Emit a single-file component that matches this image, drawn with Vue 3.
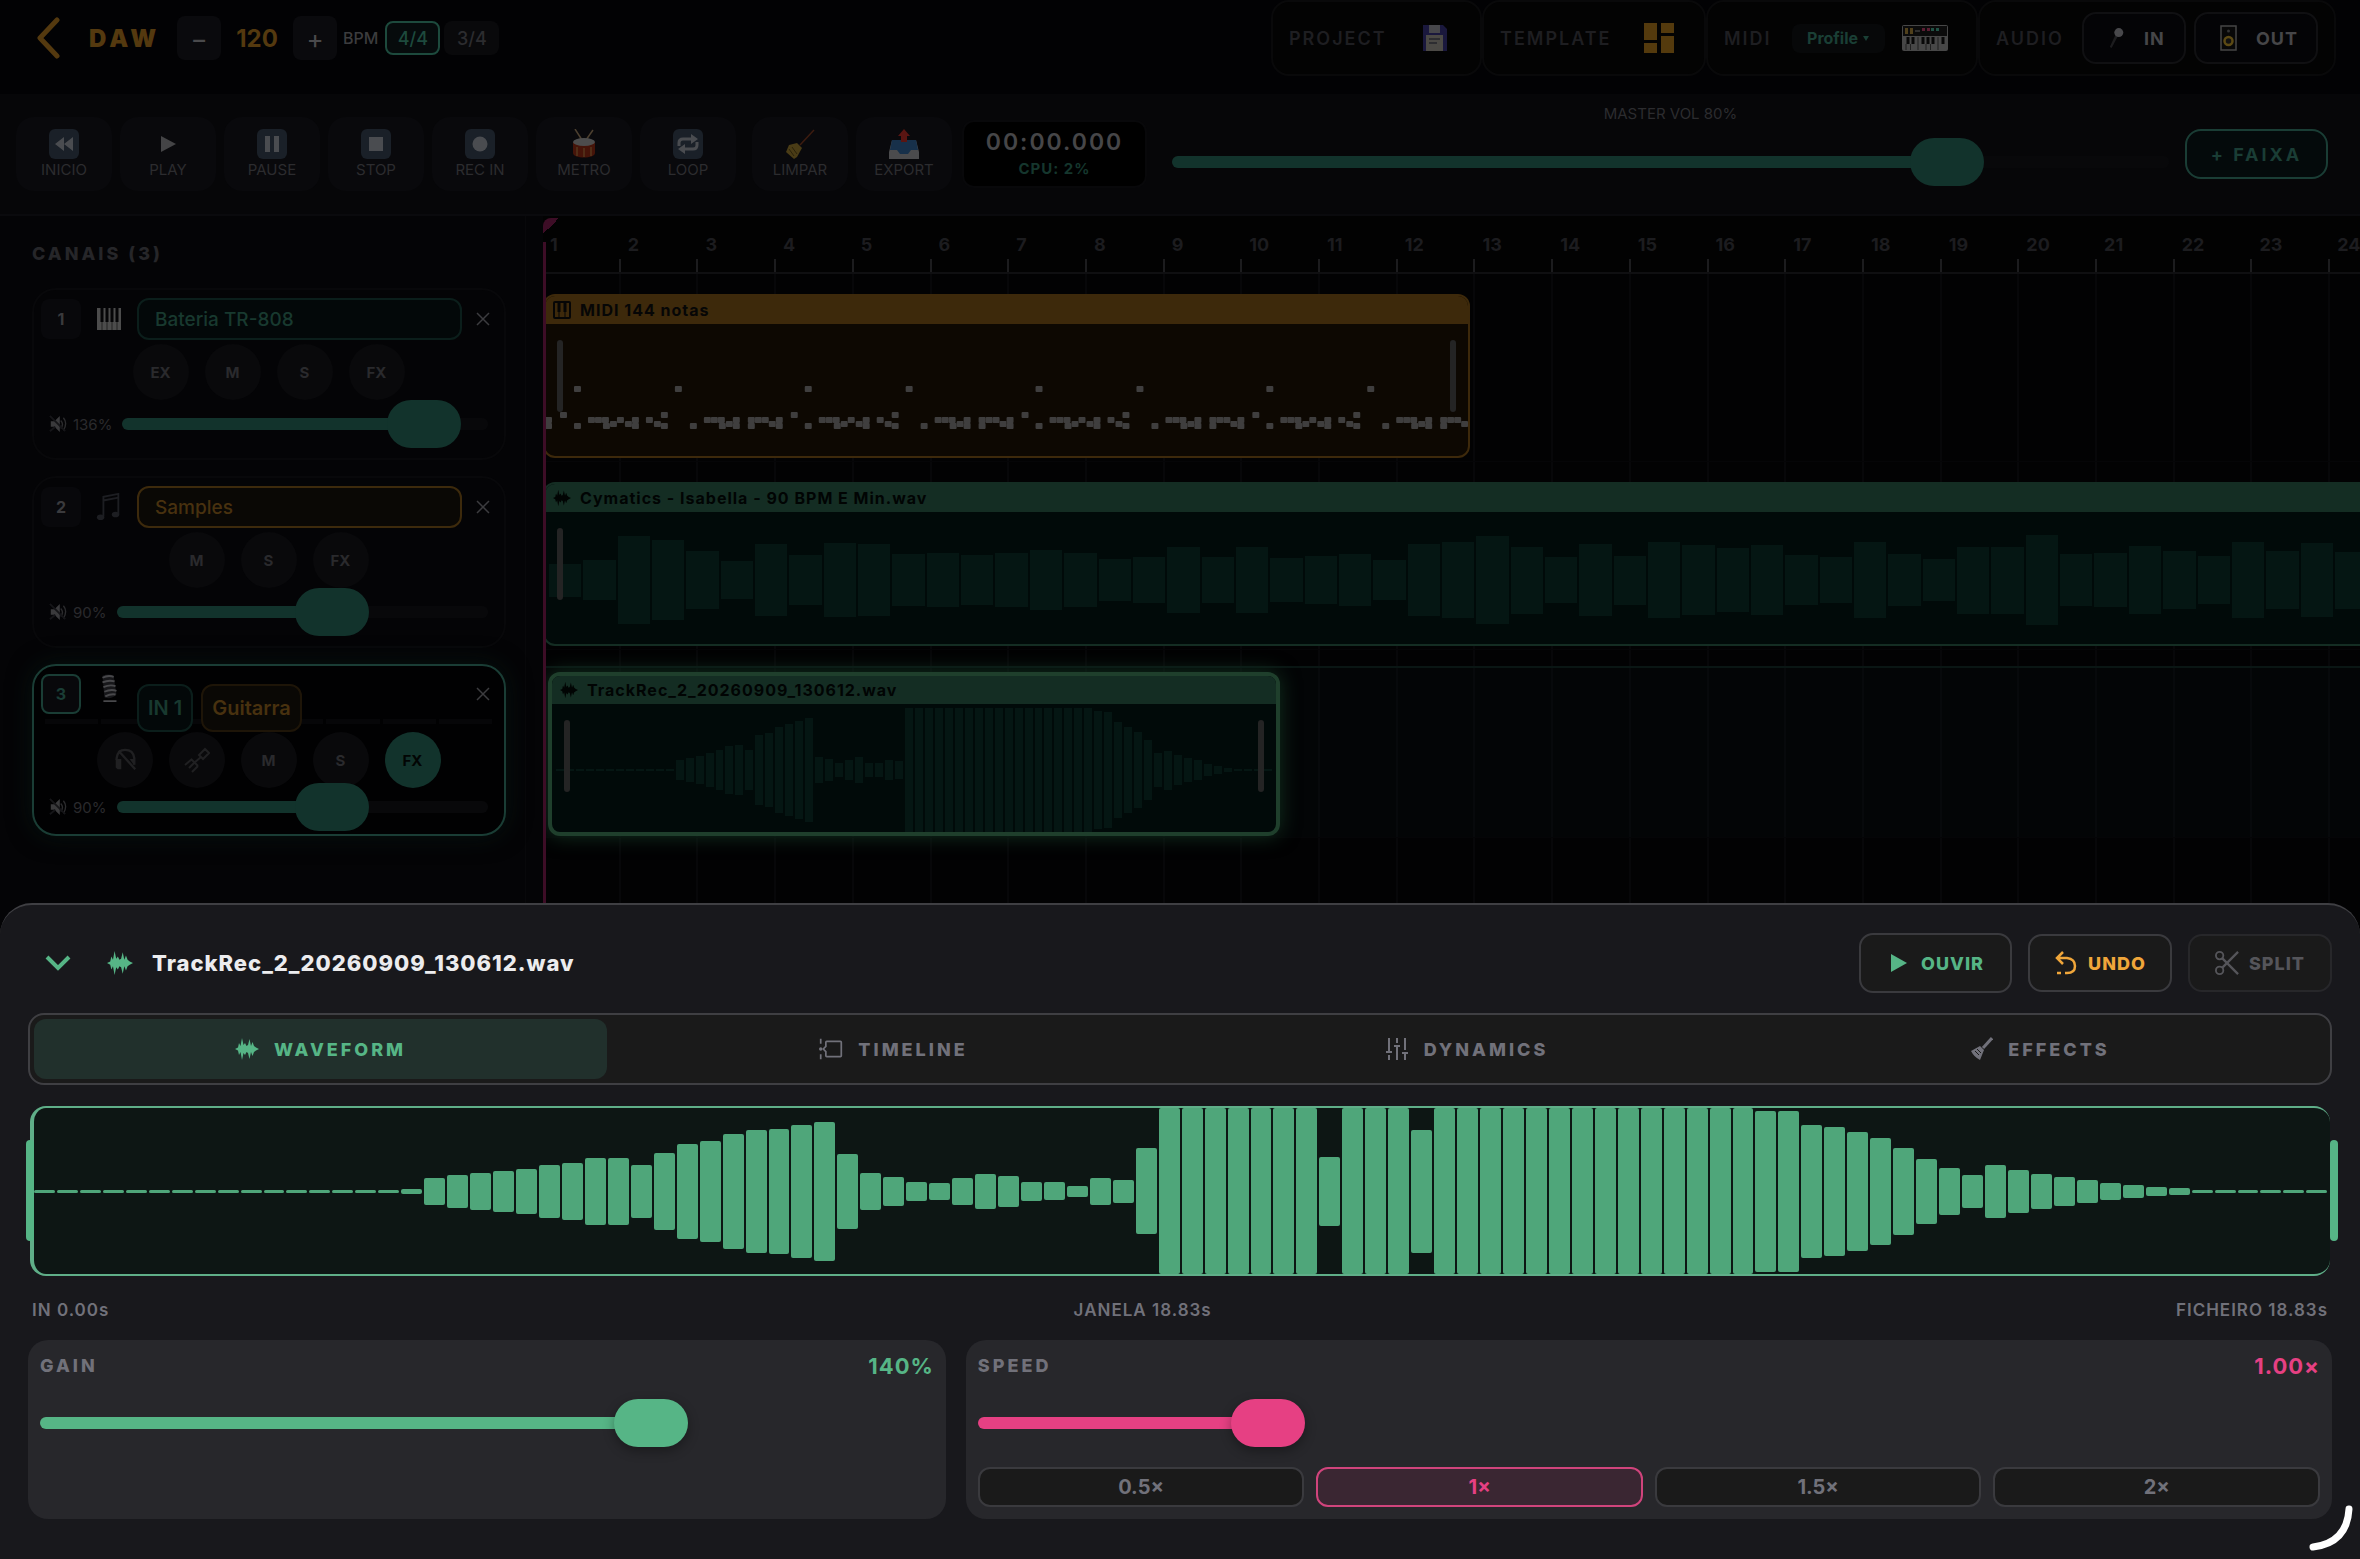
<template>
    <div class="daw">
        <!-- icon set -->
        <svg class="sprite" aria-hidden="true">
            <symbol id="i-wave" viewBox="0 0 24 24">
                <path d="M0 12 3 10.500 4 6 5.500 9 7 1 8.500 8 10 6 11.500 9 13 8 14.500 2 16 9 17.500 5 19 9 21 10.500 24 12 21 13.500 19 15 17.500 19 16 15 14.500 22 13 16 11.500 15 10 18 8.500 16 7 23 5.500 15 4 18 3 13.500Z" fill="currentColor" />
            </symbol>
            <symbol id="i-rewind" viewBox="0 0 30 30">
                <rect width="30" height="30" rx="6" fill="#1a2028" />
                <path d="M15 8v14L6 15zM24 8v14l-9-7z" fill="#4a4c50" />
            </symbol>
            <symbol id="i-play" viewBox="0 0 30 30">
                <path d="M8 7v16l15-8z" fill="#444446" />
            </symbol>
            <symbol id="i-pause" viewBox="0 0 30 30">
                <rect width="30" height="30" rx="6" fill="#1a2028" />
                <path d="M8 7h5v16H8zM17 7h5v16h-5z" fill="#4a4c50" />
            </symbol>
            <symbol id="i-stop" viewBox="0 0 30 30">
                <rect width="30" height="30" rx="6" fill="#1a2028" />
                <path d="M8 8h14v14H8z" fill="#4a4c50" />
            </symbol>
            <symbol id="i-rec" viewBox="0 0 30 30">
                <rect width="30" height="30" rx="6" fill="#1a2028" />
                <circle cx="15" cy="15" r="7.500" fill="#4a4c50" />
            </symbol>
            <symbol id="i-drum" viewBox="0 0 30 30">
                <path d="M6 0l7 11M24 1l-7 10" stroke="#4d4030" stroke-width="1.500" />
                <path d="M4 13v11c0 6 22 6 22 0V13z" fill="#451409" />
                <path d="M8 18v9M15 19v9M22 18v9" stroke="#54361c" stroke-width="1.500" />
                <ellipse cx="15" cy="13" rx="11" ry="4" fill="#4d4d4d" />
            </symbol>
            <symbol id="i-loop" viewBox="0 0 30 30">
                <rect width="30" height="30" rx="6" fill="#1a2028" />
                <path d="M6 17v-3q0-4 4-4h9M24 13v3q0 4-4 4h-9" fill="none" stroke="#4a4c50" stroke-width="3" />
                <path d="M18 5l7 5-7 5zM12 15l-7 5 7 5z" fill="#4a4c50" />
            </symbol>
            <symbol id="i-broom" viewBox="0 0 30 30">
                <path d="M29 1 15 16" stroke="#3d1c10" stroke-width="1.500" />
                <path d="M12 14l5 5-5 9-3 2-8-7 3-7z" fill="#4a3c16" />
                <path d="M7 18l5 7M4 20l5 7" stroke="#2b220a" />
            </symbol>
            <symbol id="i-export" viewBox="0 0 30 30">
                <path d="M3 11h24l3 12v7H0v-7z" fill="#4b4b4d" />
                <path d="M3 11h24l2 10h-7l-3 4h-8l-3-4H1z" fill="#17304a" />
                <path d="M15 0l6 7h-3v6h-6V7H9z" fill="#5a1512" />
            </symbol>
            <symbol id="i-floppy" viewBox="0 0 26 28">
                <path d="M1 1h20l4 4v22H1z" fill="#1a183d" />
                <path d="M7 1h11v8H7z" fill="#47474b" />
                <path d="M4 11h17v16H4z" fill="#4b4945" />
                <path d="M7 15h11M7 19h8" stroke="#25242b" stroke-width="1.500" />
            </symbol>
            <symbol id="i-template" viewBox="0 0 30 30">
                <path d="M0 0h13v17H0zM17 0h13v10H17zM0 20h13v10H0zM17 13h13v17H17z" fill="#543a0d" />
            </symbol>
            <symbol id="i-synth" viewBox="0 0 46 26">
                <rect width="46" height="26" rx="2" fill="#474747" />
                <path d="M1 1h44v10H1z" fill="#0b0b0b" />
                <path d="M3 3h3v6H3zM8 3h3v6H8z" fill="#50401b" />
                <path d="M13 6h5" stroke="#555" />
                <path d="M20 3h3v3h-3zM25 3h3v3h-3z" fill="#5b1d33" />
                <path d="M29 3h3v3h-3zM34 3h3v3h-3z" fill="#215245" />
                <path d="M6 12v7M11 12v7M21 12v7M26 12v7M31 12v7M41 12v7" stroke="#080808" stroke-width="3" />
                <path d="M4 19v6M8.500 19v6M16 12v13M24 19v6M36 12v13M28.500 19v6" stroke="#202020" />
            </symbol>
            <symbol id="i-mic" viewBox="0 0 20 26">
                <path d="M12 9 4 24l-2-1L9 8z" fill="#1c1c1e" />
                <circle cx="12" cy="7" r="5" fill="#48484b" />
            </symbol>
            <symbol id="i-speaker" viewBox="0 0 18 26">
                <rect x="1" y="1" width="15" height="24" fill="#080808" stroke="#454545" stroke-width="1.500" />
                <circle cx="8.500" cy="16" r="4" fill="#111" stroke="#5c4a14" stroke-width="2.500" />
                <circle cx="8.500" cy="6" r="1.500" fill="#333" />
            </symbol>
            <symbol id="i-keys" viewBox="0 0 26 22">
                <path d="M1 0h24v22H1z" fill="#4c4c4c" />
                <path d="M6 0v14M11 0v14M16 0v14M21 0v14" stroke="#050507" stroke-width="3" />
                <path d="M6 14v8M11 14v8M16 14v8M21 14v8" stroke="#222" />
            </symbol>
            <symbol id="i-note" viewBox="0 0 26 30">
                <path d="M7 25V4l16-3v22M7 8l16-3" fill="none" stroke="#1d1e22" stroke-width="2" />
                <ellipse cx="4" cy="26" rx="4" ry="3" fill="#1d1e22" />
                <ellipse cx="20" cy="23" rx="4" ry="3" fill="#1d1e22" />
            </symbol>
            <symbol id="i-studio" viewBox="0 0 26 30">
                <path d="M6 2q6-3 12 0l3 20q-6 6-13 3z" fill="#17171a" />
                <path d="M6 4q6-3 12-1M6 9q7-3 13-1M7 14q7-3 13-1M8 19q7-3 13-1M9 24q6-3 11-2M7 29h14" fill="none" stroke="#48484b" stroke-width="2" />
            </symbol>
            <symbol id="i-mute" viewBox="0 0 20 20">
                <path d="M2 7h4l6-6v18l-6-6H2z" fill="#3a3a3c" />
                <path d="M13 6q4 4 0 9M16 3q5 6 0 14" fill="none" stroke="#2c2c2e" stroke-width="1.500" />
                <path d="M1 1l17 17M1 18l6-5" stroke="#151518" stroke-width="2" />
            </symbol>
            <symbol id="i-close" viewBox="0 0 14 14">
                <path d="M1 1l12 12M13 1 1 13" stroke="currentColor" stroke-width="1.500" />
            </symbol>
            <symbol id="i-headoff" viewBox="0 0 26 28">
                <path d="M4 14v-2q1-9 9-9 9 0 10 9v7M6 4l18 20" fill="none" stroke="currentColor" stroke-width="2.500" />
                <path d="M3 13h6v11H5l-2-2zM18 13h5v7z" fill="currentColor" />
            </symbol>
            <symbol id="i-plug" viewBox="0 0 26 26">
                <path d="M21 2l4 4-6 6-4-4zM17 10l-7 6M7 12l7 7M8 12l-7 6M11 15l-6 6M14 19l-6 6" fill="none" stroke="currentColor" stroke-width="2" />
            </symbol>
            <symbol id="i-piano" viewBox="0 0 18 18">
                <rect x="1" y="1" width="16" height="16" rx="1" fill="none" stroke="currentColor" stroke-width="2" />
                <path d="M6 2v9M12 2v9" stroke="currentColor" stroke-width="3" />
                <path d="M6 11v6M12 11v6" stroke="currentColor" />
            </symbol>
            <symbol id="i-timeline" viewBox="0 0 28 24">
                <path d="M2 0v6M2 18v6" stroke="currentColor" stroke-width="2" />
                <circle cx="2" cy="12" r="2" fill="currentColor" />
                <path d="M9 3h16q1 0 1 1v16q0 1-1 1H9q-1 0-1-1v-5l-3-3 3-3V4q0-1 1-1z" fill="none" stroke="currentColor" stroke-width="2" />
            </symbol>
            <symbol id="i-sliders" viewBox="0 0 24 24">
                <path d="M4 1v13M4 18v5M1 15h6M12 1v5M12 10v13M9 9h6M20 1v12M20 17v6M17 16h6" stroke="currentColor" stroke-width="2" />
            </symbol>
            <symbol id="i-guitar" viewBox="0 0 24 24">
                <path d="M23 1 14 11" stroke="currentColor" stroke-width="3" />
                <path d="M11 9l4 4-4 10q-6-3-9-9z" fill="currentColor" />
                <path d="M8 12l4 4M6 14l4 4" stroke="#1a1a1a" />
            </symbol>
            <symbol id="i-undo" viewBox="0 0 24 24">
                <path d="M9 1 3 7l6 6M4 7h9q8 1 8 8t-8 7h-2M3 22h4" fill="none" stroke="currentColor" stroke-width="2.500" />
            </symbol>
            <symbol id="i-cut" viewBox="0 0 26 26">
                <circle cx="5" cy="5" r="4" fill="none" stroke="currentColor" stroke-width="2" />
                <circle cx="5" cy="21" r="4" fill="none" stroke="currentColor" stroke-width="2" />
                <path d="M8 8l17 17M8 18 25 1" stroke="currentColor" stroke-width="2.500" />
            </symbol>
        </svg>

        <header class="topbar">
            <div class="topbar-left">
                <button class="back" aria-label="Voltar">
                    <svg viewBox="0 0 24 42"><path d="M21 3 4 21l17 18" fill="none" stroke="currentColor" stroke-width="5" stroke-linecap="round" stroke-linejoin="round" /></svg>
                </button>
                <h1>DAW</h1>
                <button class="step" aria-label="Menos BPM">−</button>
                <span class="bpm">120</span>
                <button class="step" aria-label="Mais BPM">+</button>
                <span class="unit">BPM</span>
                <button class="meter on">4/4</button>
                <button class="meter">3/4</button>
            </div>
            <div class="topbar-right">
                <div class="group project"><span>PROJECT</span><button aria-label="Guardar"><svg class="floppy"><use href="#i-floppy" /></svg></button></div>
                <div class="group template"><span>TEMPLATE</span><button aria-label="Templates"><svg class="tpl"><use href="#i-template" /></svg></button></div>
                <div class="group midi">
                    <span>MIDI</span>
                    <button class="profile">Profile <i></i></button>
                    <svg class="synth"><use href="#i-synth" /></svg>
                </div>
                <div class="group audio">
                    <span>AUDIO</span>
                    <button class="io in"><svg><use href="#i-mic" /></svg>IN</button>
                    <button class="io out"><svg><use href="#i-speaker" /></svg>OUT</button>
                </div>
            </div>
        </header>

        <section class="toolbar">
            <div class="transport">
                <button v-for="t in transport" :key="t.label" :class="{ spaced: t.spaced }">
                    <svg><use :href="t.icon" /></svg>
                    {{ t.label }}
                </button>
            </div>
            <div class="clock">
                <strong>00:00.000</strong>
                <small>CPU: 2%</small>
            </div>
            <div class="master">
                <label for="master">MASTER VOL {{ master }}%</label>
                <input id="master" class="slider" type="range" min="0" max="100" v-model="master" :style="fill(master, 0, 100)">
            </div>
            <button class="add-track">+ FAIXA</button>
        </section>

        <main class="workspace">
            <aside class="channels">
                <h2>CANAIS (3)</h2>
                <article v-for="c in channels" :key="c.id" class="channel" :class="{ selected: c.selected }">
                    <div class="channel-top">
                        <span class="num">{{ c.id }}</span>
                        <svg :class="c.iconClass"><use :href="c.icon" /></svg>
                        <input v-if="!c.selected" type="text" v-model="c.name" :class="c.color" aria-label="Nome do canal">
                        <div v-else class="pills">
                            <button class="teal">IN 1</button>
                            <button class="gold">Guitarra</button>
                        </div>
                        <button class="close" aria-label="Remover canal"><svg><use href="#i-close" /></svg></button>
                    </div>
                    <div v-if="c.selected" class="level"><i v-for="n in 8" :key="n"></i></div>
                    <div class="rounds">
                        <template v-if="c.selected">
                            <button aria-label="Monitor"><svg><use href="#i-headoff" /></svg></button>
                            <button aria-label="Entrada"><svg><use href="#i-plug" /></svg></button>
                        </template>
                        <button v-for="b in c.buttons" :key="b" :class="{ on: c.selected && b === 'FX' }">{{ b }}</button>
                    </div>
                    <div class="volume">
                        <svg><use href="#i-mute" /></svg>
                        <label :for="'vol' + c.id">{{ c.volume }}%</label>
                        <input :id="'vol' + c.id" class="slider" type="range" min="0" max="150" v-model="c.volume" :style="fill(c.volume, 0, 150)">
                    </div>
                </article>
            </aside>

            <section class="timeline">
                <div class="gridlines"><i v-for="n in 24" :key="n" :style="{ width: bars(1) }"></i></div>
                <div class="ruler">
                    <span v-for="n in 24" :key="n" :style="{ width: bars(1) }">{{ n }}</span>
                </div>
                <div class="playhead"></div>

                <div class="lane">
                    <div class="clip midi-clip" :style="{ width: bars(11.93) }">
                        <div class="clip-head"><svg><use href="#i-piano" /></svg>MIDI 144 notas</div>
                        <svg class="notes" viewBox="0 0 924 132" preserveAspectRatio="none">
                            <rect v-for="(n, i) in notes" :key="i" :x="n[0]" :y="n[1]" width="7" height="6" rx="1" />
                        </svg>
                        <i class="trim left"></i><i class="trim right"></i>
                    </div>
                </div>
                <div class="lane">
                    <div class="clip audio-clip" :style="{ width: bars(23.55) }">
                        <div class="clip-head"><svg><use href="#i-wave" /></svg>Cymatics - Isabella - 90 BPM E Min.wav</div>
                        <div class="clip-wave"><i v-for="(h, i) in sampleWave" :key="i" :style="{ height: h + 'px' }"></i></div>
                        <i class="trim left"></i>
                    </div>
                </div>
                <div class="lane selected">
                    <div class="clip audio-clip active" :style="{ width: bars(9.42) }">
                        <div class="clip-head"><svg><use href="#i-wave" /></svg>TrackRec_2_20260909_130612.wav</div>
                        <div class="clip-wave"><i v-for="(h, i) in recWave" :key="i" :style="{ height: h + 'px' }"></i></div>
                        <i class="trim left"></i><i class="trim right"></i>
                    </div>
                </div>
            </section>
        </main>

        <!-- clip editor -->
        <section class="editor">
            <div class="editor-head">
                <button class="collapse" aria-label="Fechar editor">
                    <svg viewBox="0 0 26 18"><path d="M2 3l11 11L24 3" fill="none" stroke="currentColor" stroke-width="4" /></svg>
                </button>
                <svg class="title-icon"><use href="#i-wave" /></svg>
                <h2>TrackRec_2_20260909_130612.wav</h2>
                <div class="actions">
                    <button class="listen"><svg viewBox="0 0 24 24"><path d="M4 3v18l16-9z" fill="currentColor" /></svg>OUVIR</button>
                    <button class="undo"><svg><use href="#i-undo" /></svg>UNDO</button>
                    <button class="split" disabled><svg><use href="#i-cut" /></svg>SPLIT</button>
                </div>
            </div>

            <nav class="tabs">
                <button v-for="t in tabs" :key="t.label" :class="{ on: t.label === tab }" @click="tab = t.label">
                    <svg><use :href="t.icon" /></svg>{{ t.label }}
                </button>
            </nav>

            <div class="wave">
                <i class="grip start"></i>
                <div class="wave-bars"><i v-for="(h, i) in wave" :key="i" :style="{ height: h + 'px' }"></i></div>
                <i class="grip end"></i>
            </div>
            <div class="times"><span>IN 0.00s</span><span>JANELA 18.83s</span><span>FICHEIRO 18.83s</span></div>

            <div class="params">
                <div class="param">
                    <div class="param-head"><label for="gain">GAIN</label><output>{{ gain }}%</output></div>
                    <input id="gain" class="slider bright" type="range" min="0" max="200" v-model="gain" :style="fill(gain, 0, 200)">
                </div>
                <div class="param pink">
                    <div class="param-head"><label for="speed">SPEED</label><output>{{ Number(speed).toFixed(2) }}×</output></div>
                    <input id="speed" class="slider bright" type="range" min="0.5" max="3" step="0.01" v-model="speed" :style="fill(speed, 0.5, 3)">
                    <div class="presets">
                        <button v-for="s in [0.5, 1, 1.5, 2]" :key="s" :class="{ on: s === Number(speed) }" @click="speed = s">{{ s }}×</button>
                    </div>
                </div>
            </div>
        </section>

        <svg class="corner" viewBox="0 0 52 54"><path d="M41 4Q39 38 5 42" fill="none" stroke="#fff" stroke-width="7" stroke-linecap="round" /></svg>
    </div>
</template>

<script setup>
import { ref } from 'vue';

const master = ref(80);
const gain = ref(140);
const speed = ref(1);
const tab = ref('WAVEFORM');

const transport = [
    { label: 'INICIO', icon: '#i-rewind' },
    { label: 'PLAY', icon: '#i-play' },
    { label: 'PAUSE', icon: '#i-pause' },
    { label: 'STOP', icon: '#i-stop' },
    { label: 'REC IN', icon: '#i-rec' },
    { label: 'METRO', icon: '#i-drum' },
    { label: 'LOOP', icon: '#i-loop' },
    { label: 'LIMPAR', icon: '#i-broom', spaced: true },
    { label: 'EXPORT', icon: '#i-export' },
];

const channels = ref([
    { id: 1, name: 'Bateria TR-808', icon: '#i-keys', iconClass: 'keys', color: 'teal', volume: 136, buttons: ['EX', 'M', 'S', 'FX'] },
    { id: 2, name: 'Samples', icon: '#i-note', iconClass: 'tall', color: 'gold', volume: 90, buttons: ['M', 'S', 'FX'] },
    { id: 3, name: 'Guitarra', icon: '#i-studio', iconClass: 'tall', selected: true, volume: 90, buttons: ['M', 'S', 'FX'] },
]);

const tabs = [
    { label: 'WAVEFORM', icon: '#i-wave' },
    { label: 'TIMELINE', icon: '#i-timeline' },
    { label: 'DYNAMICS', icon: '#i-sliders' },
    { label: 'EFFECTS', icon: '#i-guitar' },
];

// compassos visíveis na timeline
const VISIBLE_BARS = 23.38;
const bars = (n) => (n / VISIBLE_BARS) * 100 + '%';

const fill = (v, min, max) => ({ '--fill': ((v - min) / (max - min)) * 100 + '%' });

const flat = (n, h) => Array(n).fill(h);

const wave = [
    ...flat(16, 3), 5, 27, 33, 37, 41, 45, 53, 57, 67, 67, 53, 77, 95, 101, 115, 123, 125, 133, 139,
    75, 37, 29, 19, 17, 27, 35, 31, 19, 18, 11, 27, 23, 86, ...flat(7, 166), 69, ...flat(3, 166), 123,
    ...flat(14, 166), 161, 161, 133, 129, 119, 107, 87, 65, 47, 33, 53, 43, 35, 29, 23, 17, 13, 9, 7, ...flat(6, 3),
];

const recWave = [
    ...flat(12, 2), 20, 24, 28, 34, 40, 48, 50, 40, 70, 74, 86, 92, 98, 104, 26, 22, 14, 20, 26, 14, 14, 20, 18,
    ...flat(19, 124), 118, 116, 96, 86, 76, 60, 34, 39, 30, 24, 20, 12, 8, 4, ...flat(4, 2),
];

const sampleWave = [
    33, 40, 88, 80, 58, 38, 72, 50, 74, 72, 52, 54, 50, 54, 60, 54, 42, 46, 66, 46, 66, 44, 48, 52, 40, 72, 76,
    88, 67, 46, 72, 49, 76, 70, 64, 70, 50, 46, 76, 52, 42, 67, 67, 90, 52, 54, 68, 58, 48, 76, 58, 74, 57,
];

// padrão da bateria, repetido a cada 231 unidades
const pattern = {
    62: [29, 130],
    88: [15, 116],
    93: [0, 43, 50, 57, 72, 87, 159, 166, 173, 188, 203, 210, 217, 101],
    97: [65, 80, 109, 181, 224],
    99: [0, 29, 58, 87, 116, 145, 174, 188, 203],
};
const notes = [];
for (let r = 0; r < 4; r++) {
    for (const [y, xs] of Object.entries(pattern)) {
        xs.forEach((x) => notes.push([x + r * 231, Number(y)]));
    }
}
</script>

<style>
body {
    background: #040406;
}
</style>

<style scoped>
* {
    box-sizing: border-box;
}

.daw {
    min-height: 100vh;
    font-family: Inter, "Liberation Sans", sans-serif;
    font-size: 16px;
    color: #2c2c2f;
    background: #040406;
    overflow: hidden;
}

button, input {
    font: inherit;
    color: inherit;
    margin: 0;
    padding: 0;
    border: 0;
    background: none;
}

h1, h2 {
    margin: 0;
}

i {
    display: block;
    font-style: normal;
}

svg {
    display: block;
    flex: none;
}

.sprite {
    position: absolute;
    width: 0;
    height: 0;
}

/* top bar */
.topbar {
    display: flex;
    justify-content: space-between;
    height: 94px;
    padding: 0 24px 18px 32px;
    background: #020204;
}

.topbar-left, .topbar-right {
    display: flex;
    align-items: center;
}

.back {
    width: 57px;
    padding-left: 4px;
    color: #54390f;
}

.back svg {
    width: 24px;
    height: 42px;
}

h1 {
    width: 88px;
    font-size: 24px;
    font-weight: 900;
    letter-spacing: 4px;
    color: #54390f;
}

.step {
    width: 44px;
    height: 44px;
    border-radius: 8px;
    background: #0a0a0d;
    color: #4a4a4c;
    font-size: 26px;
}

.bpm {
    width: 72px;
    text-align: center;
    font-size: 24px;
    font-weight: 700;
    color: #54390f;
}

.unit {
    margin: 0 7px 0 6px;
    font-weight: 500;
    color: #3c3c3e;
}

.meter {
    width: 55px;
    height: 34px;
    margin-right: 4px;
    border-radius: 8px;
    background: #09090b;
    font-size: 18px;
    font-weight: 500;
}

.meter.on {
    border: 2px solid #1d4a3d;
    background: #060b0c;
    color: #1d4a3d;
}

.group {
    display: flex;
    align-items: center;
    height: 76px;
    padding: 0 16px;
    border: 2px solid #09090a;
    border-radius: 18px;
    background: #030303;
    font-size: 18px;
    font-weight: 600;
    letter-spacing: 2px;
    color: #1e1e21;
}

.project {
    width: 211px;
    justify-content: space-between;
    padding-right: 32px;
}

.floppy {
    width: 26px;
    height: 28px;
}

.template {
    width: 224px;
    justify-content: space-between;
    padding-right: 30px;
}

.tpl {
    width: 30px;
    height: 30px;
}

.midi {
    width: 272px;
}

.profile {
    display: flex;
    align-items: center;
    justify-content: center;
    gap: 5px;
    width: 93px;
    height: 29px;
    margin: 0 17px 0 20px;
    border-radius: 8px;
    background: #070809;
    color: #1a3f35;
    font-size: 16px;
    font-weight: 700;
    letter-spacing: 0;
}

.profile i {
    border: 3px solid transparent;
    border-top: 5px solid #1a3f35;
    border-bottom: 0;
}

.synth {
    width: 46px;
    height: 26px;
}

.audio {
    width: 358px;
}

.io {
    display: flex;
    align-items: center;
    gap: 18px;
    height: 52px;
    margin-left: 8px;
    padding-left: 24px;
    border: 2px solid #101012;
    border-radius: 14px;
    background: #040406;
    color: #464648;
    font-weight: 700;
    letter-spacing: 1px;
}

.io svg {
    width: 18px;
    height: 26px;
}

.in {
    width: 104px;
    margin-left: auto;
}

.out {
    width: 124px;
}

/* transport */
.toolbar {
    display: flex;
    align-items: center;
    height: 122px;
    padding: 0 32px 0 16px;
    border-bottom: 2px solid #0a0a0d;
    background: #060608;
}

.transport {
    display: flex;
    gap: 8px;
}

.transport button {
    display: flex;
    flex-direction: column;
    align-items: center;
    gap: 2px;
    width: 96px;
    height: 74px;
    padding-top: 12px;
    border-radius: 18px;
    background: #09090c;
    color: #2c2c2f;
    font-size: 15px;
    line-height: 18px;
}

.transport svg {
    width: 30px;
    height: 30px;
}

.transport .spaced {
    margin-left: 8px;
}

.clock {
    display: flex;
    flex: none;
    flex-direction: column;
    align-items: center;
    justify-content: center;
    width: 185px;
    height: 68px;
    margin: 0 25px 0 10px;
    border: 2px solid #08080a;
    border-radius: 12px;
    background: #000;
    color: #464648;
}

.clock strong {
    font-size: 23px;
    font-weight: 600;
    line-height: 30px;
    letter-spacing: 2px;
}

.clock small {
    font-size: 15px;
    font-weight: 700;
    line-height: 24px;
    letter-spacing: 1px;
    color: #15362d;
}

.master {
    display: flex;
    flex: 1;
    flex-direction: column;
    align-self: flex-start;
    gap: 14px;
    padding-top: 10px;
    text-align: center;
    font-size: 15px;
    line-height: 20px;
}

.slider {
    --color: #12332c;
    --rail: #08080a;
    appearance: none;
    display: block;
    width: 100%;
    height: 48px;
    background: none;
    outline: none;
}

.slider::-webkit-slider-runnable-track {
    height: 12px;
    border-radius: 6px;
    background: linear-gradient(90deg, var(--color) var(--fill), var(--rail) var(--fill));
}

.slider::-webkit-slider-thumb {
    appearance: none;
    width: 74px;
    height: 48px;
    margin-top: -18px;
    border-radius: 24px;
    background: var(--color);
}

.add-track {
    width: 143px;
    height: 50px;
    margin-left: 16px;
    border: 2px solid #1a3d35;
    border-radius: 16px;
    background: #040a0b;
    color: #1a3d35;
    font-size: 18px;
    font-weight: 700;
    letter-spacing: 3px;
}

/* workspace */
.workspace {
    display: grid;
    grid-template-columns: 526px 1fr;
    height: calc(100vh - 216px);
}

.channels {
    display: flex;
    flex-direction: column;
    gap: 16px;
    padding: 24px 19px 0 32px;
    border-right: 1px solid #08080a;
}

.channels h2 {
    margin-bottom: 4px;
    font-size: 18px;
    font-weight: 800;
    line-height: 28px;
    letter-spacing: 3px;
    color: #262629;
}

.channel {
    height: 172px;
    padding: 8px 0 0 7px;
    border: 2px solid #08080a;
    border-radius: 24px;
    background: #040406;
}

.channel.selected {
    border-color: #1a3d35;
    background: #010102;
    box-shadow: 0 0 24px #06120f;
}

.channel-top {
    display: flex;
    align-items: center;
    height: 42px;
}

.num {
    width: 40px;
    height: 40px;
    border-radius: 8px;
    background: #08080b;
    color: #3a3a3d;
    text-align: center;
    font-weight: 700;
    line-height: 40px;
}

.selected .num {
    border: 2px solid #1a3d35;
    color: #1a3d35;
    line-height: 36px;
}

.keys {
    width: 26px;
    height: 22px;
    margin: 0 15px;
}

.tall {
    width: 26px;
    height: 28px;
    margin: 0 15px;
}

.channel-top input {
    flex: 1;
    min-width: 0;
    height: 42px;
    padding: 0 16px;
    border: 2px solid;
    border-radius: 12px;
    font-size: 19px;
    font-weight: 500;
}

.channel .teal {
    border-color: #0b1e1b;
    background: #030809;
    color: #18392f;
}

.channel .gold {
    border-color: #3d2a0c;
    background: #0a0805;
    color: #48310f;
}

.close {
    display: flex;
    justify-content: center;
    width: 42px;
    margin-left: auto;
    color: #3c3c3f;
}

.close svg {
    width: 14px;
    height: 14px;
}

.selected .channel-top {
    align-items: flex-start;
    height: 45px;
}

.selected .close {
    padding-top: 13px;
}

.pills {
    display: flex;
    gap: 8px;
    padding-top: 10px;
    position: relative;
    z-index: 1;
}

.pills button {
    height: 48px;
    padding: 0 9px;
    border: 2px solid;
    border-radius: 12px;
    font-size: 20px;
    font-weight: 600;
}

.pills .gold {
    border-color: #1e1508;
}

.level {
    display: flex;
    gap: 3px;
    margin: 0 12px 8px 4px;
}

.level i {
    flex: 1;
    height: 5px;
    background: #060608;
}

.rounds {
    display: flex;
    justify-content: center;
    gap: 16px;
    padding: 4px 8px 0 0;
}

.selected .rounds {
    padding-top: 0;
}

.rounds button {
    display: flex;
    align-items: center;
    justify-content: center;
    width: 56px;
    height: 56px;
    border-radius: 50%;
    background: #09090b;
    color: #2a2a2d;
    font-size: 15px;
    font-weight: 700;
}

.rounds svg {
    width: 26px;
    height: 26px;
    color: #202022;
}

.rounds .on {
    background: #12332c;
    color: #020504;
}

.volume {
    display: flex;
    align-items: center;
    height: 48px;
    padding: 0 16px 0 8px;
    font-size: 15px;
    color: #2a2a2d;
}

.selected .volume {
    margin-top: -5px;
}

.volume svg {
    width: 18px;
    height: 18px;
    margin-right: 6px;
}

.volume label {
    margin-right: 10px;
}

.volume .slider {
    flex: 1;
    min-width: 0;
}

/* timeline */
.timeline {
    position: relative;
    margin-left: 17px;
    overflow: hidden;
    background: #020203;
}

.ruler {
    display: flex;
    height: 58px;
    border-bottom: 2px solid #0f0f11;
    background: #020202;
    overflow: hidden;
}

.ruler span {
    flex: none;
    padding: 15px 0 0 7px;
    font-size: 18px;
    font-weight: 700;
    line-height: 28px;
    color: #1c1c1f;
    background: linear-gradient(#1c1c1e, #1c1c1e) right bottom / 2px 13px no-repeat;
}

.gridlines {
    display: flex;
    position: absolute;
    inset: 58px 0 0;
}

.gridlines i {
    flex: none;
    border-right: 2px solid #070709;
}

.playhead {
    position: absolute;
    z-index: 2;
    top: 26px;
    bottom: 0;
    left: 0;
    width: 3px;
    background: #3d0d26;
}

.playhead::before {
    content: "";
    position: absolute;
    left: 0;
    top: -24px;
    width: 16px;
    height: 16px;
    border-radius: 8px 0 0;
    background: linear-gradient(135deg, #3d0d26 50%, transparent 50%);
}

.lane {
    position: relative;
    height: 172px;
    margin-top: 16px;
    padding-top: 4px;
    border-bottom: 1px solid #050507;
}

.lane.selected {
    border-top: 2px solid #0a1614;
    background: #0a161433;
}

.clip {
    position: relative;
    display: flex;
    flex-direction: column;
    height: 164px;
    border: 2px solid #3d290b;
    border-radius: 12px;
    background: #0d0802;
    overflow: hidden;
}

.clip-head {
    display: flex;
    flex: none;
    align-items: center;
    gap: 9px;
    height: 28px;
    padding: 0 8px;
    background: #3d290b;
    color: #060606;
    font-weight: 700;
    letter-spacing: 1px;
    white-space: nowrap;
}

.clip-head svg {
    width: 18px;
    height: 18px;
}

.notes {
    width: 100%;
    height: 132px;
    fill: #3f3e3e;
}

.audio-clip {
    border-color: #142d23;
    background: #010a09;
}

.audio-clip .clip-head {
    background: #142d23;
    color: #010403;
}

.clip-wave {
    display: flex;
    flex: 1;
    align-items: center;
    gap: 2px;
    padding: 4px 4px 0;
    overflow: hidden;
}

.clip-wave i {
    flex: 1;
    background: #051613;
}

.active {
    margin-left: 5px;
    border: 4px solid #1f3f2c;
    box-shadow: 0 0 20px #12301f;
}

.active .clip-wave {
    margin-bottom: -4px;
    padding-bottom: 4px;
}

.trim {
    position: absolute;
    top: 44px;
    left: 12px;
    width: 6px;
    height: 72px;
    border-radius: 3px;
    background: #242424;
}

.trim.right {
    left: auto;
    right: 12px;
}

/* clip editor, slides over the workspace */
.editor {
    position: fixed;
    z-index: 5;
    right: 0;
    bottom: 0;
    left: 0;
    padding: 28px 28px 40px;
    border-top: 2px solid #3f3f43;
    border-radius: 32px 32px 0 0;
    background: #18181c;
    color: #71717a;
}

.editor-head {
    display: flex;
    align-items: center;
    height: 60px;
}

.collapse {
    padding: 0 36px 0 17px;
    color: #56b586;
}

.collapse svg {
    width: 26px;
    height: 18px;
}

.title-icon {
    width: 26px;
    height: 26px;
    color: #56b586;
}

.editor-head h2 {
    margin-left: 19px;
    font-size: 22px;
    font-weight: 800;
    letter-spacing: 1px;
    color: #ececee;
}

.actions {
    display: flex;
    align-items: center;
    gap: 16px;
    margin-left: auto;
}

.actions button {
    display: flex;
    align-items: center;
    justify-content: center;
    gap: 10px;
    width: 144px;
    height: 58px;
    border: 2px solid #3a3a3e;
    border-radius: 14px;
    background: #1a1a1a;
    font-size: 18px;
    font-weight: 800;
    letter-spacing: 1px;
}

.actions svg {
    width: 24px;
    height: 24px;
}

.actions .listen {
    width: 153px;
    height: 60px;
    color: #56b586;
}

.actions .undo {
    color: #f0a63a;
}

.actions .split {
    border-color: #27272a;
    color: #55555a;
}

.tabs {
    display: flex;
    height: 72px;
    margin-top: 20px;
    padding: 4px;
    border: 2px solid #3f3f43;
    border-radius: 16px;
    background: #1a1a1a;
}

.tabs button {
    display: flex;
    flex: 1;
    align-items: center;
    justify-content: center;
    gap: 15px;
    border-radius: 12px;
    font-size: 18px;
    font-weight: 800;
    letter-spacing: 3px;
}

.tabs svg {
    width: 24px;
    height: 24px;
}

.tabs .on {
    background: #21302c;
    color: #56b586;
}

.wave {
    position: relative;
    height: 170px;
    margin: 21px 2px 0;
    border: solid #5fae88;
    border-width: 2px 0 2px 4px;
    border-radius: 16px;
    background: #0d1614;
}

.wave-bars {
    display: flex;
    align-items: center;
    gap: 2px;
    height: 100%;
    padding-right: 2px;
}

.wave-bars i {
    flex: 1;
    border-radius: 2px;
    background: #4fa67a;
}

.grip {
    position: absolute;
    top: 32px;
    width: 8px;
    height: 101px;
    border-radius: 4px;
    background: #56b586;
}

.start {
    left: -8px;
}

.end {
    right: -8px;
}

.times {
    display: flex;
    justify-content: space-between;
    margin: 20px 4px 16px;
    font-size: 17px;
    font-weight: 600;
    line-height: 28px;
    letter-spacing: 1px;
}

.params {
    display: grid;
    grid-template-columns: 43fr 64fr;
    gap: 20px;
}

.param {
    padding: 12px;
    border-radius: 20px;
    background: #27272b;
}

.param-head {
    display: flex;
    align-items: center;
    justify-content: space-between;
    height: 27px;
    margin-bottom: 20px;
}

.param-head label {
    font-size: 18px;
    font-weight: 800;
    letter-spacing: 3px;
}

.param-head output {
    font-size: 22px;
    font-weight: 700;
    letter-spacing: 1px;
    color: #56b586;
}

.bright {
    --color: #56b586;
    --rail: #27272b;
}

.bright::-webkit-slider-thumb {
    box-shadow: 0 4px 12px #0005;
}

.pink output {
    color: #e64083;
}

.pink .slider {
    --color: #e64083;
}

.presets {
    display: grid;
    grid-template-columns: repeat(4, 1fr);
    gap: 12px;
    margin-top: 20px;
}

.presets button {
    height: 40px;
    border: 2px solid #3a3a3e;
    border-radius: 12px;
    background: #1a1a1a;
    font-size: 20px;
    font-weight: 700;
}

.presets .on {
    border-color: #d0447c;
    background: #3a2632;
    color: #e64083;
}

.corner {
    position: fixed;
    z-index: 6;
    right: 0;
    bottom: 0;
    width: 52px;
    height: 54px;
}
</style>
